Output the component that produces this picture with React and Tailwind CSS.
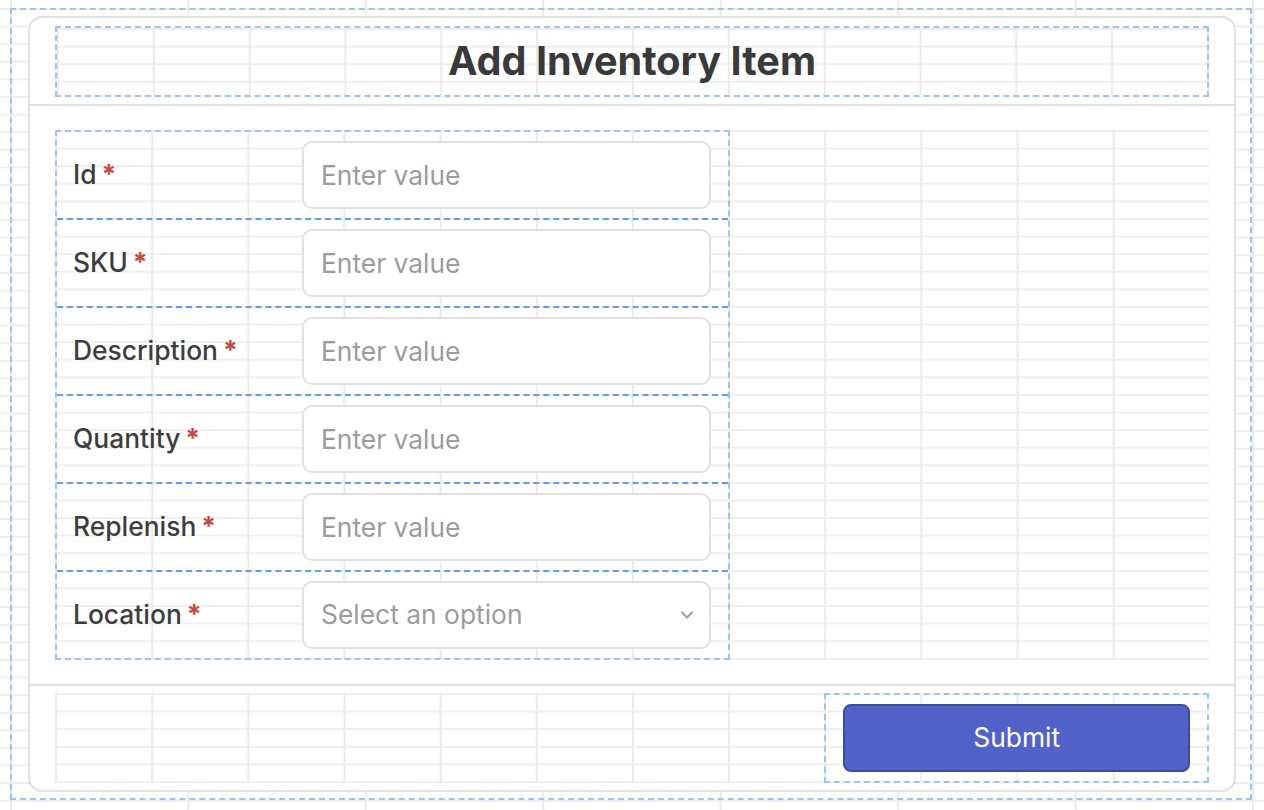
// App.jsx
import React, { useState } from "react";

const FIELDS = [
  { name: "id", label: "Id" },
  { name: "sku", label: "SKU" },
  { name: "description", label: "Description" },
  { name: "quantity", label: "Quantity" },
  { name: "replenish", label: "Replenish" },
];

const gridBg =
  "bg-[linear-gradient(to_right,#eaeaea_1.5px,transparent_1.5px),linear-gradient(to_bottom,#eeeeee_1.5px,transparent_1.5px)] bg-[size:calc(100%/12)_100%,100%_17.6px]";

function FieldLabel({ children }) {
  return (
    <label className="w-[229px] shrink-0 text-[26.4px] font-medium text-[#3d3d3d]">
      {children}
      <span className="ml-[5px] font-bold text-[#c8463a]">*</span>
    </label>
  );
}

function App() {
  const [values, setValues] = useState({});
  const [location, setLocation] = useState("");

  const update = (name) => (e) =>
    setValues((v) => ({ ...v, [name]: e.target.value }));

  const handleSubmit = (e) => {
    e.preventDefault();
  };

  return (
    <div
      className="min-h-screen w-full bg-white bg-[linear-gradient(to_right,#eaeaea_1.5px,transparent_1.5px),linear-gradient(to_bottom,#eeeeee_1.5px,transparent_1.5px)] bg-[size:177.43px_100%,100%_17.6px] bg-[position:10px_0,0_8px] pt-[8px] pl-[10px] pr-[12px] pb-[10px]"
      style={{ fontFamily: "Inter, 'Noto Sans', sans-serif" }}
    >
      <div className="border-2 border-dashed border-[#98c4f8] pl-[16px] pr-[14px] py-[6px]">
        <form
          onSubmit={handleSubmit}
          className="rounded-[14px] border-2 border-[#e0e0e0] bg-white"
        >
          {/* header */}
          <div className="border-b-2 border-[#e0e0e0] px-[25px] pt-[8px] pb-[7px]">
            <div
              className={`flex h-[71px] items-center justify-center border-2 border-dashed border-[#98c4f8] ${gridBg}`}
            >
              <h1 className="text-[39.6px] font-bold leading-none text-[#3a3a3a]">
                Add Inventory Item
              </h1>
            </div>
          </div>

          {/* fields */}
          <div className="px-[25px] py-[24px]">
            <div className={`flex h-[530px] ${gridBg}`}>
              <div className="flex w-[675px] flex-col border-2 border-dashed border-[#98c4f8]">
                {FIELDS.map((f) => (
                  <div
                    key={f.name}
                    className="flex h-[88px] items-center border-b-2 border-dashed border-[#5c9ef0] pl-[16px] pr-[17px]"
                  >
                    <FieldLabel>{f.label}</FieldLabel>
                    <input
                      type="text"
                      placeholder="Enter value"
                      value={values[f.name] || ""}
                      onChange={update(f.name)}
                      className="h-[68px] min-w-0 flex-1 rounded-[10px] border-2 border-[#e0e0e0] bg-white px-[17px] text-[26.4px] text-[#333] placeholder:text-[#9b9b9b] focus:outline-none"
                    />
                  </div>
                ))}
                <div className="flex flex-1 items-center pl-[16px] pr-[17px]">
                  <FieldLabel>Location</FieldLabel>
                  <div className="relative flex-1">
                    <select
                      value={location}
                      onChange={(e) => setLocation(e.target.value)}
                      className={`h-[68px] w-full appearance-none rounded-[10px] border-2 border-[#e0e0e0] bg-white px-[17px] text-[26.4px] focus:outline-none ${
                        location ? "text-[#333]" : "text-[#9b9b9b]"
                      }`}
                    >
                      <option value="" disabled>
                        Select an option
                      </option>
                      <option value="a">Warehouse A</option>
                      <option value="b">Warehouse B</option>
                    </select>
                    <svg
                      className="pointer-events-none absolute right-[17px] top-1/2 -translate-y-1/2"
                      width="14"
                      height="9"
                      viewBox="0 0 14 9"
                      fill="none"
                    >
                      <path
                        d="M2 2l5 5 5-5"
                        stroke="#a0a0a0"
                        strokeWidth="2.2"
                        strokeLinecap="round"
                        strokeLinejoin="round"
                      />
                    </svg>
                  </div>
                </div>
              </div>
            </div>
          </div>

          {/* footer */}
          <div className="border-t-2 border-[#e0e0e0] px-[25px] pt-[7px] pb-[7px]">
            <div className={`grid h-[90px] grid-cols-12 ${gridBg}`}>
              <div className="col-span-4 col-start-9 border-2 border-dashed border-[#98c4f8] px-[17px] pt-[9px] pb-[8px]">
                <button
                  type="submit"
                  className="h-[68px] w-full rounded-[8px] border-2 border-[#3c4aa8] bg-[#5262c9] text-[26.4px] text-white hover:bg-[#4655bd]"
                >
                  Submit
                </button>
              </div>
            </div>
          </div>
        </form>
      </div>
    </div>
  );
}

export default App;
